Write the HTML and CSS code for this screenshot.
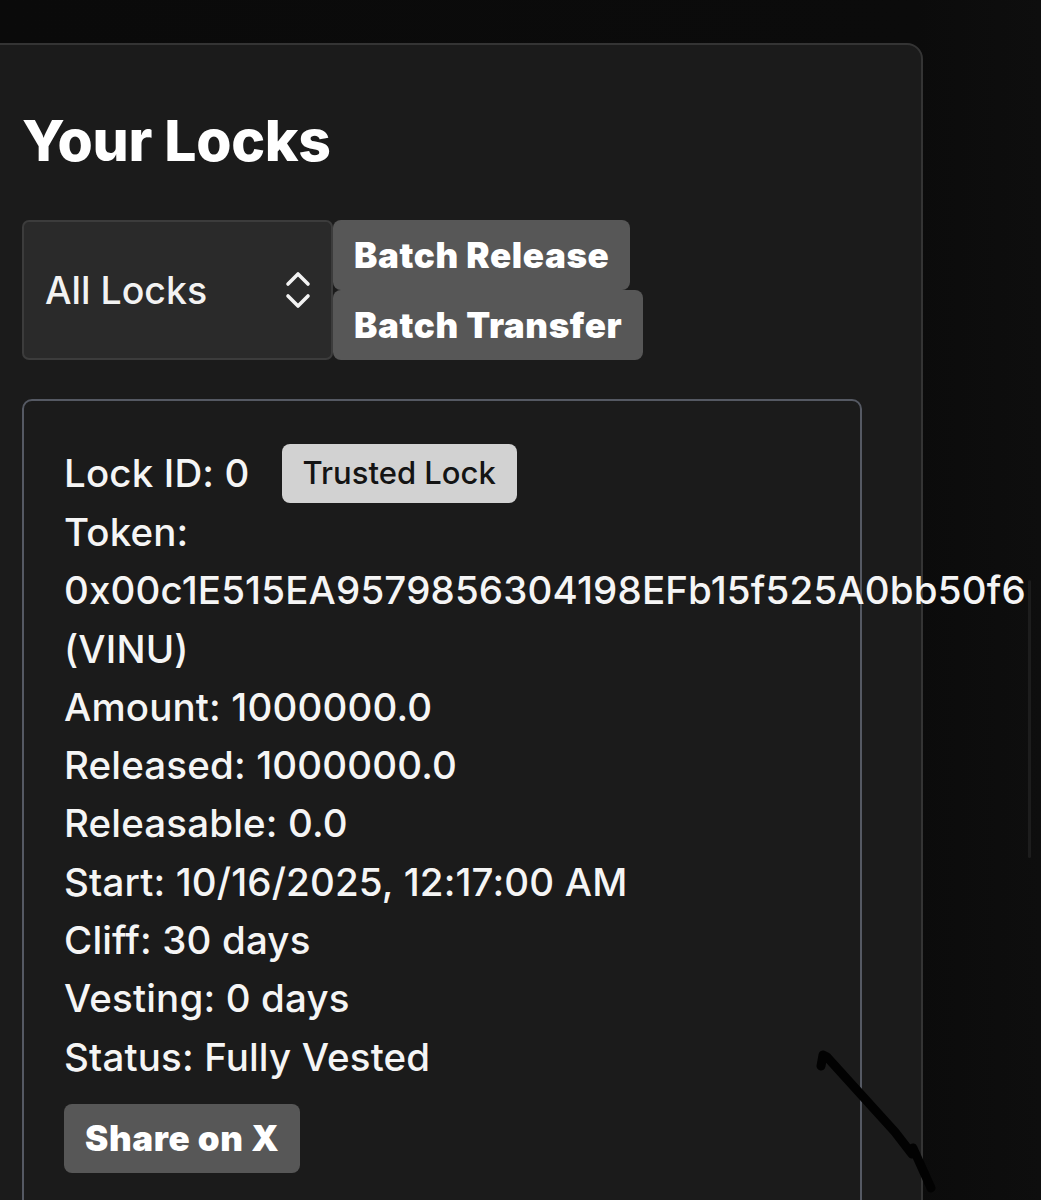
FILE: index.html
```html
<!DOCTYPE html>
<html lang="en">
<head>
<meta charset="utf-8">
<title>Your Locks</title>
<link rel="stylesheet" href="styles.css">
</head>
<body>
<div class="page">
  <section class="panel">
    <h1 class="title">Your Locks</h1>
    <div class="controls">
      <div class="select">
        <span class="select-label">All Locks</span>
        <svg class="select-icon" width="26" height="40" viewBox="0 0 26 40" aria-hidden="true">
          <path d="M3 14 L13 4 L23 14" fill="none" stroke="#f2f2f2" stroke-width="3.6" stroke-linecap="round" stroke-linejoin="round"/>
          <path d="M3 26 L13 36 L23 26" fill="none" stroke="#f2f2f2" stroke-width="3.6" stroke-linecap="round" stroke-linejoin="round"/>
        </svg>
      </div>
      <div class="batch">
        <button class="btn">Batch Release</button>
        <button class="btn">Batch Transfer</button>
      </div>
    </div>
    <div class="card">
      <div class="row row-id">
        <span>Lock ID: 0</span>
        <span class="badge">Trusted Lock</span>
      </div>
      <div class="row">Token: 0x00c1E515EA9579856304198EFb15f525A0bb50f6 (VINU)</div>
      <div class="row">Amount: 1000000.0</div>
      <div class="row">Released: 1000000.0</div>
      <div class="row">Releasable: 0.0</div>
      <div class="row">Start: 10/16/2025, 12:17:00 AM</div>
      <div class="row">Cliff: 30 days</div>
      <div class="row">Vesting: 0 days</div>
      <div class="row">Status: Fully Vested</div>
      <button class="btn btn-share">Share on X</button>
    </div>
  </section>
  <div class="scroll-mark"></div>
  <svg class="pen-stroke" width="140" height="172" viewBox="0 0 140 172" aria-hidden="true">
    <path d="M21 40 L23 29 L27 31 L95 106 L112 128 L113 122 L131 162" fill="none" stroke="#020202" stroke-width="9" stroke-linecap="round" stroke-linejoin="round"/>
  </svg>
</div>
</body>
</html>
```

FILE: styles.css
```css
html, body {
  margin: 0;
  padding: 0;
  background: #0b0b0b;
  height: 1200px;
  overflow: hidden;
}

.page {
  position: relative;
  min-height: 1200px;
  background: linear-gradient(to right, #0a0a0a 0%, #0b0b0b 88%, #0e0e0e 100%);
  font-family: Inter, "Noto Sans", "Liberation Sans", sans-serif;
  color: #f5f5f5;
  overflow: hidden;
}

.panel {
  margin: 43px 0 0 -20px;
  width: 943px;
  box-sizing: border-box;
  min-height: 1200px;
  background: #1b1b1b;
  border: 2px solid #343434;
  border-radius: 16px;
  padding: 56px 0 0 40px;
}

.title {
  margin: 0;
  font-size: 57px;
  font-weight: 800;
  line-height: 80px;
  letter-spacing: -0.3px;
  color: #ffffff;
}

.controls {
  display: flex;
  align-items: flex-start;
  margin-top: 39px;
}

.select {
  box-sizing: border-box;
  width: 311px;
  height: 140px;
  background: #2a2a2a;
  border: 2px solid #3c3c3c;
  border-radius: 7px;
  display: flex;
  align-items: center;
  justify-content: space-between;
  padding: 0 20px 0 21px;
}

.select-label {
  font-size: 37.5px;
  font-weight: 500;
  color: #f2f2f2;
}

.select-icon {
  display: block;
}

.batch {
  display: flex;
  flex-direction: column;
  align-items: flex-start;
}

.btn {
  font-family: Inter, "Noto Sans", "Liberation Sans", sans-serif;
  font-weight: 900;
  font-size: 35px;
  letter-spacing: 0.6px;
  color: #ffffff;
  background: #575757;
  border: none;
  border-radius: 8px;
  height: 70px;
  padding: 0 21px;
  text-align: left;
  cursor: pointer;
}

.card {
  margin-top: 39px;
  width: 840px;
  box-sizing: border-box;
  min-height: 820px;
  border: 2px solid #555963;
  border-radius: 10px;
  padding: 43px 40px 30px 40px;
  font-size: 38.5px;
  font-weight: 500;
  line-height: 58.3px;
  letter-spacing: 0.15px;
  color: #f5f5f5;
}

.row-id {
  display: flex;
  align-items: center;
  gap: 32px;
}

.badge {
  display: inline-flex;
  align-items: center;
  height: 59px;
  padding: 0 21px;
  background: #d2d2d2;
  color: #141414;
  border-radius: 8px;
  font-size: 31px;
  font-weight: 500;
  letter-spacing: 0;
}

.btn-share {
  display: block;
  margin-top: 18px;
  height: 69px;
}

.scroll-mark {
  position: absolute;
  left: 1028px;
  top: 580px;
  width: 3px;
  height: 278px;
  background: #1d1d1d;
  border-radius: 2px;
}

.pen-stroke {
  position: absolute;
  left: 800px;
  top: 1026px;
}
```
